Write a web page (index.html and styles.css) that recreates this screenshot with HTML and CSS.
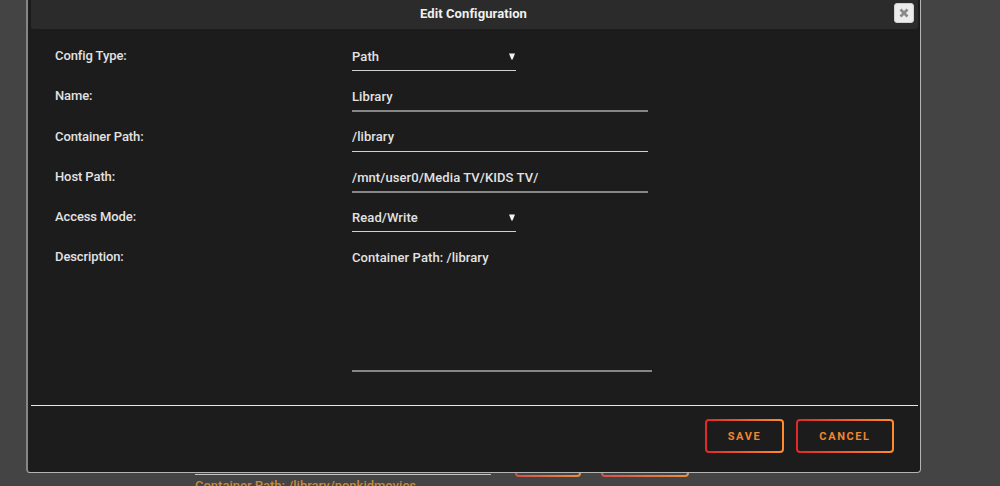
FILE: index.html
```html
<!DOCTYPE html>
<html lang="en">
<head>
  <meta charset="UTF-8">
  <title>Edit Configuration</title>
  <link rel="stylesheet" href="styles.css">
</head>
<body>

  <main class="page">
    <div class="page-row">
      <div class="page-field">
        <div class="page-input"></div>
        <div class="page-help">Container Path: /library/nonkidmovies</div>
      </div>
      <div class="btn page-edit"></div>
      <div class="btn page-remove"></div>
    </div>
  </main>

  <div class="dialog" role="dialog" aria-labelledby="dialogTitle">
    <header class="titlebar">
      <span class="title" id="dialogTitle">Edit Configuration</span>
      <button type="button" class="close" aria-label="Close">
        <svg width="10" height="10" viewBox="0 0 10 10">
          <path d="M1.5 1.5 L8.5 8.5 M8.5 1.5 L1.5 8.5" stroke="#8a8a8a" stroke-width="2.8" />
        </svg>
      </button>
    </header>

    <form class="fields">
      <div class="row">
        <label for="type">Config Type:</label>
        <div class="select">
          <select id="type"><option>Path</option></select>
          <svg class="arrow" width="6" height="7" viewBox="0 0 6 7"><path d="M0 0.5 H6 L3.6 6.5 H2.4 Z" fill="#f2f2f2" /></svg>
        </div>
      </div>
      <div class="row">
        <label for="name">Name:</label>
        <input id="name" type="text" class="soft" value="Library">
      </div>
      <div class="row">
        <label for="target">Container Path:</label>
        <input id="target" type="text" value="/library">
      </div>
      <div class="row">
        <label for="host">Host Path:</label>
        <input id="host" type="text" class="soft host" value="/mnt/user0/Media TV/KIDS TV/">
      </div>
      <div class="row">
        <label for="mode">Access Mode:</label>
        <div class="select">
          <select id="mode"><option>Read/Write</option></select>
          <svg class="arrow" width="6" height="7" viewBox="0 0 6 7"><path d="M0 0.5 H6 L3.6 6.5 H2.4 Z" fill="#f2f2f2" /></svg>
        </div>
      </div>
      <div class="row">
        <label for="desc">Description:</label>
        <textarea id="desc">Container Path: /library</textarea>
      </div>
    </form>

    <footer class="buttons">
      <button type="button" class="btn save">SAVE</button>
      <button type="button" class="btn cancel">CANCEL</button>
    </footer>
  </div>

</body>
</html>
```

FILE: styles.css
```css
* {
  box-sizing: border-box;
}

body {
  margin: 0;
  height: 486px;
  overflow: hidden;
  background-color: #444;
  color: #e2e2e2;
  font-family: Roboto, sans-serif;
  font-size: 13px;
  font-weight: 500;
}

.page {
  height: 486px;
  padding: 440px 0 0 195px;
  overflow: hidden;
}

.page-row {
  display: flex;
  align-items: flex-start;
}

.page-field {
  width: 296px;
  margin-right: 24px;
}

.page-input {
  height: 35px;
  border-bottom: 1px solid #c4c4c4;
}

.page-help {
  margin-top: 3px;
  line-height: 16px;
  color: #c48a35;
  white-space: nowrap;
}

.btn {
  border: 2px solid transparent;
  border-radius: 4px;
  background: linear-gradient(#1c1c1c, #1c1c1c) padding-box,
    linear-gradient(90deg, #e22828, #ff8c2f) border-box;
  color: #f0862e;
  font-family: inherit;
  font-size: 11px;
  font-weight: 700;
  letter-spacing: 1.6px;
}

.page-edit,
.page-remove {
  height: 37px;
  width: 66px;
  margin-right: 20px;
  background: linear-gradient(#444, #444) padding-box,
    linear-gradient(90deg, #d94f4f, #e89040) border-box;
}

.page-remove {
  width: 88px;
}

/* modal sits over the page */
.dialog {
  position: absolute;
  left: 26px;
  top: -10px;
  width: 895px;
  height: 483px;
  padding: 0 2px 0 3px;
  border: 1px solid #b4b4b4;
  border-left: 2px solid #868686;
  border-radius: 4px;
  background-color: #1c1c1c;
}

.titlebar {
  display: grid;
  grid-template-columns: 1fr auto 1fr;
  height: 38px;
  padding: 12px 4px 0 0;
  border-radius: 3px;
  background-color: #2b2b2b;
}

.title {
  grid-column: 2;
  padding-left: 2px;
  line-height: 21px;
  font-weight: 700;
  letter-spacing: 0.08px;
  color: #f0f0f0;
}

.close {
  justify-self: end;
  display: flex;
  align-items: center;
  justify-content: center;
  width: 20px;
  height: 20px;
  padding: 0;
  border: 1px solid #d0d0d0;
  border-radius: 3px;
  background-color: #ececec;
}

.fields {
  height: 377px;
  padding: 9px 0 0 24px;
  border-bottom: 1px solid #e6e6e6;
}

.row {
  display: grid;
  grid-template-columns: 297px 1fr;
  align-items: start;
  height: 40.25px;
}

label {
  line-height: 35.6px;
  letter-spacing: -0.1px;
}

input,
select,
textarea {
  display: block;
  margin: 0;
  padding: 0;
  border: 0;
  border-radius: 0;
  background: transparent;
  color: inherit;
  font: inherit;
  letter-spacing: 0.08px;
  outline: none;
  resize: none;
  appearance: none;
}

input {
  width: 296px;
  height: 33px;
  padding-top: 4px;
  border-bottom: 1px solid #d0d0d0;
}

.soft {
  height: 34px;
  padding-top: 5px;
  border-bottom: 2px solid #868686;
}

.host {
  padding-top: 6px;
}

.select {
  display: flex;
  align-items: center;
  width: 164px;
  height: 33px;
  padding: 5px 1px 0 0;
  border-bottom: 1px solid #d0d0d0;
}

.select select {
  flex: 1;
}

textarea {
  width: 300px;
  height: 133px;
  padding-top: 11px;
  line-height: 16px;
  border-bottom: 2px solid #868686;
}

.buttons {
  display: flex;
  justify-content: flex-end;
  gap: 12px;
  padding: 13px 24px 0 0;
}

.buttons .btn {
  height: 34px;
  padding: 0;
}

.save {
  width: 79px;
}

.cancel {
  width: 98px;
}
```
